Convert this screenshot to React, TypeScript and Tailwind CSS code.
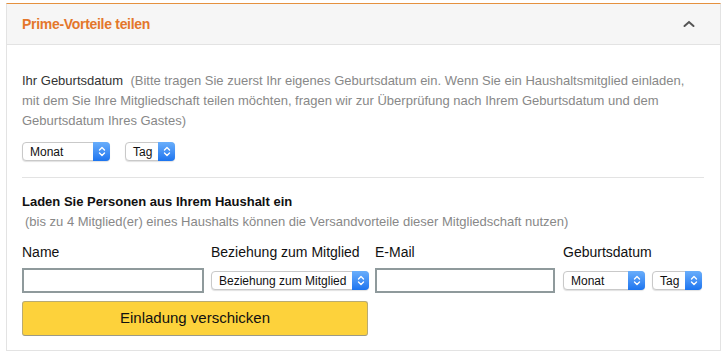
import React from "react";

function Arrows() {
  return (
    <svg width="8" height="11" viewBox="0 0 8 11" fill="none" stroke="white" strokeWidth="1.4" strokeLinecap="round" strokeLinejoin="round">
      <path d="M1.5 4 L4 1.5 L6.5 4" />
      <path d="M1.5 7 L4 9.5 L6.5 7" />
    </svg>
  );
}

function MacSelect({ label, className }: { label: string; className: string }) {
  return (
    <div
      className={
        "flex h-[19px] items-stretch rounded-[4px] border border-[#c9c9c9] bg-white shadow-[0_1px_1px_rgba(0,0,0,0.12)] " +
        className
      }
    >
      <div className="flex flex-1 items-center pl-[7px] text-[12px] text-[#111]">{label}</div>
      <div className="-my-px -mr-px flex w-[17px] items-center justify-center rounded-r-[4px] bg-gradient-to-b from-[#69aefb] to-[#1b74ef]">
        <Arrows />
      </div>
    </div>
  );
}

export default function App() {
  return (
    <div
      className="min-h-[353px] bg-white px-[6px] pt-[3px]"
      style={{ fontFamily: '"Liberation Sans", Arial, Helvetica, sans-serif' }}
    >
      <div className="border-x border-b border-t border-x-[#e3e3e3] border-b-[#e3e3e3] border-t-[#e5913f]">
        <div className="flex h-[41px] items-center justify-between border-b border-[#e3e3e3] bg-[#f6f6f6] pl-[15px] pr-[25px]">
          <span className="text-[14px] font-bold tracking-[-0.3px] text-[#e4772b]">Prime-Vorteile teilen</span>
          <svg width="12" height="8" viewBox="0 0 12 8" fill="none" stroke="#555" strokeWidth="2" strokeLinecap="round">
            <path d="M1.5 6 L6 2 L10.5 6" />
          </svg>
        </div>
        <div className="px-[15px] pb-[14px] pt-[26px]">
          <p className="text-[13px] leading-[20px] text-[#888]">
            <span className="text-[#333]">Ihr Geburtsdatum</span>&nbsp; (Bitte tragen Sie zuerst Ihr eigenes Geburtsdatum ein. Wenn Sie ein Haushaltsmitglied einladen,
            <br />
            mit dem Sie Ihre Mitgliedschaft teilen möchten, fragen wir zur Überprüfung nach Ihrem Geburtsdatum und dem
            <br />
            Geburtsdatum Ihres Gastes)
          </p>
          <div className="mt-[11px] flex gap-[15px]">
            <MacSelect label="Monat" className="w-[88px]" />
            <MacSelect label="Tag" className="w-[50px]" />
          </div>
          <div className="mr-[1px] mt-[16px] border-t border-[#e3e3e3]" />
          <h3 className="mt-[14px] text-[13px] font-bold leading-[20px] text-[#111]">Laden Sie Personen aus Ihrem Haushalt ein</h3>
          <p className="pl-[3px] text-[13px] leading-[20px] text-[#888]">
            (bis zu 4 Mitglied(er) eines Haushalts können die Versandvorteile dieser Mitgliedschaft nutzen)
          </p>
          <div className="mt-[10px] flex text-[14px] leading-[20px] text-[#111]">
            <div className="w-[189px]">Name</div>
            <div className="w-[164px]">Beziehung zum Mitglied</div>
            <div className="w-[188px]">E-Mail</div>
            <div>Geburtsdatum</div>
          </div>
          <div className="mt-[6px] flex items-center">
            <div className="h-[25px] w-[182px] border-2 border-[#8f9a9c] bg-white" />
            <MacSelect label="Beziehung zum Mitglied" className="ml-[7px] w-[158px]" />
            <div className="ml-[6px] h-[25px] w-[180px] border-2 border-[#8f9a9c] bg-white" />
            <MacSelect label="Monat" className="ml-[8px] w-[82px]" />
            <MacSelect label="Tag" className="ml-[7px] w-[50px]" />
          </div>
          <button className="mt-[8px] flex h-[35px] w-[346px] items-center justify-center rounded-[3px] border border-[#b9ab72] border-b-[#9c9a85] bg-[#fdd23b] text-[15px] text-[#111]">
            Einladung verschicken
          </button>
        </div>
      </div>
    </div>
  );
}
